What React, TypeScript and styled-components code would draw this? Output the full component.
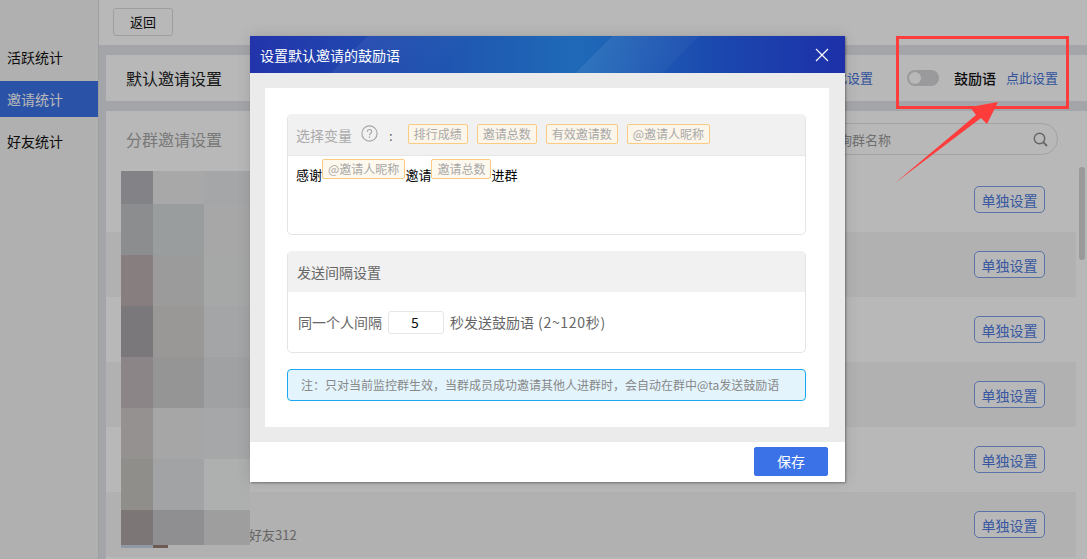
import React from "react";
import styled, { createGlobalStyle } from "styled-components";

const Global = createGlobalStyle`
  html, body { margin: 0; padding: 0; width: 100%; height: 100%; overflow: hidden; }
  body { font-family: "Noto Sans CJK SC", "Noto Sans", sans-serif; font-size: 14px; color: #000; }
  * { box-sizing: border-box; }
`;

const Page = styled.div`
  position: relative;
  width: 1087px;
  height: 559px;
  overflow: hidden;
  display: flex;
  background: #e4e5e9;
`;
const Sidebar = styled.nav`
  width: 99px;
  flex: none;
  padding-top: 39px;
  background: #f4f4f4;
  border-right: 1px solid #dcdde0;
  display: flex;
  flex-direction: column;
  gap: 6px;
`;
const NavItem = styled.div<{ $active?: boolean }>`
  height: 36px;
  line-height: 36px;
  padding-left: 7px;
  font-size: 14px;
  color: ${(p) => (p.$active ? "#fff" : "#111")};
  background: ${(p) => (p.$active ? "#3b72e8" : "transparent")};
`;
const Main = styled.main`
  flex: 1;
  min-width: 0;
  display: flex;
  flex-direction: column;
`;
const TopBar = styled.div`
  height: 45px;
  flex: none;
  background: #fff;
  padding: 8px 14px;
`;
const BackButton = styled.button`
  width: 60px;
  height: 28px;
  padding: 0;
  background: #fff;
  border: 1px solid #dcdcdc;
  border-radius: 3px;
  font: 13px/26px "Noto Sans CJK SC", sans-serif;
  color: #111;
`;
const Content = styled.div`
  flex: 1;
  min-height: 0;
  padding: 10px 0 0 7px;
  display: flex;
  flex-direction: column;
  gap: 10px;
`;
const DefaultCard = styled.section`
  height: 46px;
  flex: none;
  background: #fff;
  padding: 0 29px 0 20px;
  display: flex;
  align-items: center;
`;
const CardTitle = styled.h2<{ $muted?: boolean }>`
  margin: 0;
  font-size: 16px;
  line-height: 24px;
  font-weight: 400;
  color: ${(p) => (p.$muted ? "#a8a8a8" : "#222")};
`;
const Spacer = styled.div`
  flex: 1;
`;
const LinkText = styled.a`
  font-size: 13px;
  line-height: 20px;
  color: #4472d8;
`;
const Toggle = styled.span`
  width: 32px;
  height: 16px;
  margin: 0 15px 0 34px;
  padding: 2px;
  border-radius: 8px;
  background: #d6d6da;
  display: flex;
`;
const ToggleKnob = styled.span`
  width: 12px;
  height: 12px;
  border-radius: 50%;
  background: #fff;
`;
const SwitchLabel = styled.span`
  margin-right: 10px;
  font-size: 14px;
  line-height: 20px;
  font-weight: 500;
  color: #111;
`;
const GroupCard = styled.section`
  flex: 1;
  min-height: 0;
  background: #fff;
  display: flex;
  flex-direction: column;
`;
const GroupHead = styled.div`
  height: 56px;
  flex: none;
  padding: 0 29px 0 20px;
  display: flex;
  align-items: center;
  justify-content: space-between;
`;
const SearchBox = styled.div`
  width: 298px;
  height: 32px;
  padding: 0 9px 0 26px;
  border: 1px solid #e2e2e2;
  border-radius: 16px;
  display: flex;
  align-items: center;
  justify-content: space-between;
  font-size: 13px;
  color: #9a9a9a;
`;
const GroupBody = styled.div`
  flex: 1;
  min-height: 0;
  display: flex;
`;
const RowList = styled.div`
  flex: 1;
  min-width: 0;
`;
const Row = styled.div<{ $striped?: boolean }>`
  height: 65px;
  padding: 0 31px 0 143px;
  display: flex;
  align-items: center;
  justify-content: space-between;
  background: ${(p) => (p.$striped ? "#f6f6f6" : "#fff")};
`;
const RowName = styled.span`
  padding-top: 20px;
  font-size: 13px;
  line-height: 18px;
  color: #8d8d8d;
`;
const RowButton = styled.button`
  width: 71px;
  height: 27px;
  margin-left: auto;
  padding: 0;
  background: #fff;
  border: 1.5px solid #7f9fe6;
  border-radius: 5px;
  font: 14px/22px "Noto Sans CJK SC", sans-serif;
  color: #4f7be0;
`;
const ScrollTrack = styled.div`
  width: 11px;
  flex: none;
  padding-left: 3px;
`;
const ScrollThumb = styled.div`
  width: 6px;
  height: 93px;
  border-radius: 3px;
  background: #d6d6d6;
`;
const Overlay = styled.div`
  position: absolute;
  inset: 0;
  background: rgba(0, 0, 0, 0.28);
`;
const Mosaic = styled.div`
  position: absolute;
  left: 121px;
  top: 171px;
  width: 129px;
  display: grid;
  grid-template-columns: 32px 51px 46px;
  grid-template-rows: 33px repeat(6, 51px) 35px 3px;
`;
const MosaicCell = styled.div<{ $c: string }>`
  background: ${(p) => p.$c};
`;
const MosaicStrip = styled.div`
  grid-column: 1 / -1;
  width: 47px;
  background: linear-gradient(90deg, #8f98a3 0 32px, #6d5a55 32px 47px);
`;
const Modal = styled.div`
  position: absolute;
  left: 250px;
  top: 36px;
  width: 595px;
  height: 446px;
  display: flex;
  flex-direction: column;
  background: #fff;
  box-shadow: 1px 1px 2px rgba(0, 0, 0, 0.35), 0 0 14px rgba(0, 0, 0, 0.12);
`;
const ModalHeader = styled.header`
  height: 37px;
  flex: none;
  padding: 0 16px 0 10px;
  display: flex;
  align-items: center;
  justify-content: space-between;
  color: #fff;
  font-size: 14px;
  background:
    linear-gradient(135deg, transparent 83px, rgba(255, 255, 255, 0.05) 83px, rgba(255, 255, 255, 0) 160px),
    linear-gradient(135deg, transparent 256px, rgba(255, 255, 255, 0.07) 256px, rgba(255, 255, 255, 0.03) 318px, transparent 318px),
    linear-gradient(90deg, #2234ab 0%, #1f5cb2 40%, #1f6ab8 55%, #1b46ae 80%, #1d30a9 100%);
`;
const CloseIcon = styled.svg`
  width: 14px;
  height: 14px;
  display: block;
`;
const ModalBody = styled.div`
  flex: 1;
  min-height: 0;
  padding: 15px 16px 15px 15px;
  background: #ebebeb;
  display: flex;
`;
const Panel = styled.div`
  flex: 1;
  background: #fff;
  padding: 26px 23px 0 22px;
  display: flex;
  flex-direction: column;
`;
const Section = styled.div<{ $height: number }>`
  height: ${(p) => p.$height}px;
  flex: none;
  border: 1px solid #e4e4e4;
  border-top: none;
  border-radius: 5px;
  overflow: hidden;
  display: flex;
  flex-direction: column;
`;
const SectionHead = styled.div`
  height: 41px;
  flex: none;
  margin: 0 -1px;
  padding-left: 10px;
  background: #f1f1f1;
  display: flex;
  align-items: center;
  font-size: 14px;
  color: #666;
`;
const VariableHead = styled(SectionHead)`
  padding-left: 9px;
  padding-bottom: 2px;
`;
const VarLabel = styled.span`
  margin-top: 3px;
  font-size: 14px;
  color: #aaa;
`;
const HelpIcon = styled.svg`
  width: 17px;
  height: 17px;
  margin-left: 9px;
  flex: none;
`;
const Colon = styled.span`
  margin: 3px 15px 0 11px;
  color: #666;
  font-size: 13px;
`;
const Tag = styled.span<{ $inline?: boolean }>`
  display: inline-block;
  height: 20px;
  padding: 0 5px;
  border: 1px solid #fbcb83;
  border-radius: 2px;
  background: ${(p) => (p.$inline ? "#fef9ef" : "#fbf5ea")};
  font-size: 12px;
  line-height: 18px;
  color: #a8a8a8;
  vertical-align: 6px;
  margin-right: ${(p) => (p.$inline ? "0" : "9px")};
  white-space: nowrap;
`;
const Editor = styled.div`
  flex: 1;
  border-top: 1px solid #e6e6e6;
  padding: 3px 8px;
  font-size: 13px;
  line-height: 20px;
  color: #000;
  white-space: nowrap;
`;
const IntervalRow = styled.div`
  flex: 1;
  padding-left: 10px;
  display: flex;
  align-items: center;
  font-size: 14px;
  color: #666;
`;
const NumberBox = styled.span`
  width: 56px;
  height: 23px;
  margin: 0 6px;
  border: 1px solid #e6e6e6;
  border-radius: 3px;
  font-size: 14px;
  line-height: 21px;
  text-align: center;
  color: #111;
  padding-right: 2px;
`;
const RangeHint = styled.span`
  margin-left: 4px;
  letter-spacing: 0.7px;
`;
const Notice = styled.div`
  height: 32px;
  flex: none;
  margin-top: 16px;
  padding-left: 13px;
  border: 1px solid #1aa9f0;
  border-radius: 4px;
  background: #e3f4fd;
  font-size: 12px;
  line-height: 30px;
  color: #888;
  white-space: nowrap;
`;
const Gap = styled.div`
  height: 16px;
  flex: none;
`;
const ModalFooter = styled.footer`
  height: 40px;
  flex: none;
  padding: 5px 17px 0 0;
  display: flex;
  justify-content: flex-end;
  align-items: flex-start;
`;
const SaveButton = styled.button`
  width: 74px;
  height: 29px;
  padding: 0;
  border: 1px solid #3b72e8;
  border-radius: 2px;
  background: #3b72e8;
  color: #fff;
  font: 14px/27px "Noto Sans CJK SC", sans-serif;
`;
const HighlightBox = styled.div`
  position: absolute;
  left: 896px;
  top: 36px;
  width: 173px;
  height: 73px;
  border: 3px solid #ff3c3c;
`;
const Arrow = styled.svg`
  position: absolute;
  left: 890px;
  top: 95px;
  width: 115px;
  height: 95px;
`;

const mosaicColors = [
  ["#838287", "#a8a8a8", "#a5a6a8"],
  ["#8b8d8f", "#9a9d9e", "#a7a7a7"],
  ["#877f7f", "#9b9b9b", "#a6a8a7"],
  ["#7a787a", "#9a9896", "#a4a5a7"],
  ["#8b8587", "#959595", "#a0a1a3"],
  ["#959191", "#a6a6a6", "#a6a7a9"],
  ["#8f8e8a", "#a2a3a5", "#aeb0af"],
  ["#7c7676", "#8f8f91", "#9e9e9f"],
];
const rows = [0, 1, 2, 3, 4, 5];
const variables = ["排行成绩", "邀请总数", "有效邀请数", "@邀请人昵称"];

export default function App() {
  return (
    <Page>
      <Global />
      <Sidebar>
        <NavItem>活跃统计</NavItem>
        <NavItem $active>邀请统计</NavItem>
        <NavItem>好友统计</NavItem>
      </Sidebar>
      <Main>
        <TopBar>
          <BackButton>返回</BackButton>
        </TopBar>
        <Content>
          <DefaultCard>
            <CardTitle>默认邀请设置</CardTitle>
            <Spacer />
            <LinkText>点此设置</LinkText>
            <Toggle>
              <ToggleKnob />
            </Toggle>
            <SwitchLabel>鼓励语</SwitchLabel>
            <LinkText>点此设置</LinkText>
          </DefaultCard>
          <GroupCard>
            <GroupHead>
              <CardTitle $muted>分群邀请设置</CardTitle>
              <SearchBox>
                <span>请输入查询群名称</span>
                <svg width="15" height="15" viewBox="0 0 15 15" fill="none" stroke="#8c8c8c" strokeWidth="1.4">
                  <circle cx="6.5" cy="6.5" r="5.2" />
                  <path d="M10.4 10.4 14 14" strokeWidth="1.8" />
                </svg>
              </SearchBox>
            </GroupHead>
            <GroupBody>
              <RowList>
                {rows.map((r) => (
                  <Row key={r} $striped={r % 2 === 1}>
                    {r === 5 && <RowName>好友312</RowName>}
                    <RowButton>单独设置</RowButton>
                  </Row>
                ))}
              </RowList>
              <ScrollTrack>
                <ScrollThumb />
              </ScrollTrack>
            </GroupBody>
          </GroupCard>
        </Content>
      </Main>
      <Overlay />
      <Mosaic>
        {mosaicColors.flat().map((c, i) => (
          <MosaicCell key={i} $c={c} />
        ))}
        <MosaicStrip />
      </Mosaic>
      <Modal>
        <ModalHeader>
          <span>设置默认邀请的鼓励语</span>
          <CloseIcon viewBox="0 0 14 14" fill="none" stroke="#fff" strokeWidth="1.2">
            <path d="M1 1 13 13M13 1 1 13" />
          </CloseIcon>
        </ModalHeader>
        <ModalBody>
          <Panel>
            <Section $height={121}>
              <VariableHead>
                <VarLabel>选择变量</VarLabel>
                <HelpIcon viewBox="0 0 17 17" fill="none" stroke="#a8a8a8" strokeWidth="1.2">
                  <circle cx="8.5" cy="8.5" r="7.6" />
                  <path d="M6.3 6.7c0-1.3 1-2.2 2.2-2.2s2.2.9 2.2 2.1c0 1.7-2.2 1.7-2.2 3.7" />
                  <path d="M8.5 11.6v1.3" />
                </HelpIcon>
                <Colon>:</Colon>
                {variables.map((v) => (
                  <Tag key={v}>{v}</Tag>
                ))}
              </VariableHead>
              <Editor>
                感谢<Tag $inline>@邀请人昵称</Tag>邀请<Tag $inline>邀请总数</Tag>进群
              </Editor>
            </Section>
            <Gap />
            <Section $height={102}>
              <SectionHead>发送间隔设置</SectionHead>
              <IntervalRow>
                同一个人间隔
                <NumberBox>5</NumberBox>
                秒发送鼓励语
                <RangeHint>(2~120秒)</RangeHint>
              </IntervalRow>
            </Section>
            <Notice>注：只对当前监控群生效，当群成员成功邀请其他人进群时，会自动在群中@ta发送鼓励语</Notice>
          </Panel>
        </ModalBody>
        <ModalFooter>
          <SaveButton>保存</SaveButton>
        </ModalFooter>
      </Modal>
      <HighlightBox />
      <Arrow viewBox="0 0 115 95" fill="#ff3c3c">
        <polygon points="5,88 86,20 80,12 108,7 97,29 91,23" />
      </Arrow>
    </Page>
  );
}
